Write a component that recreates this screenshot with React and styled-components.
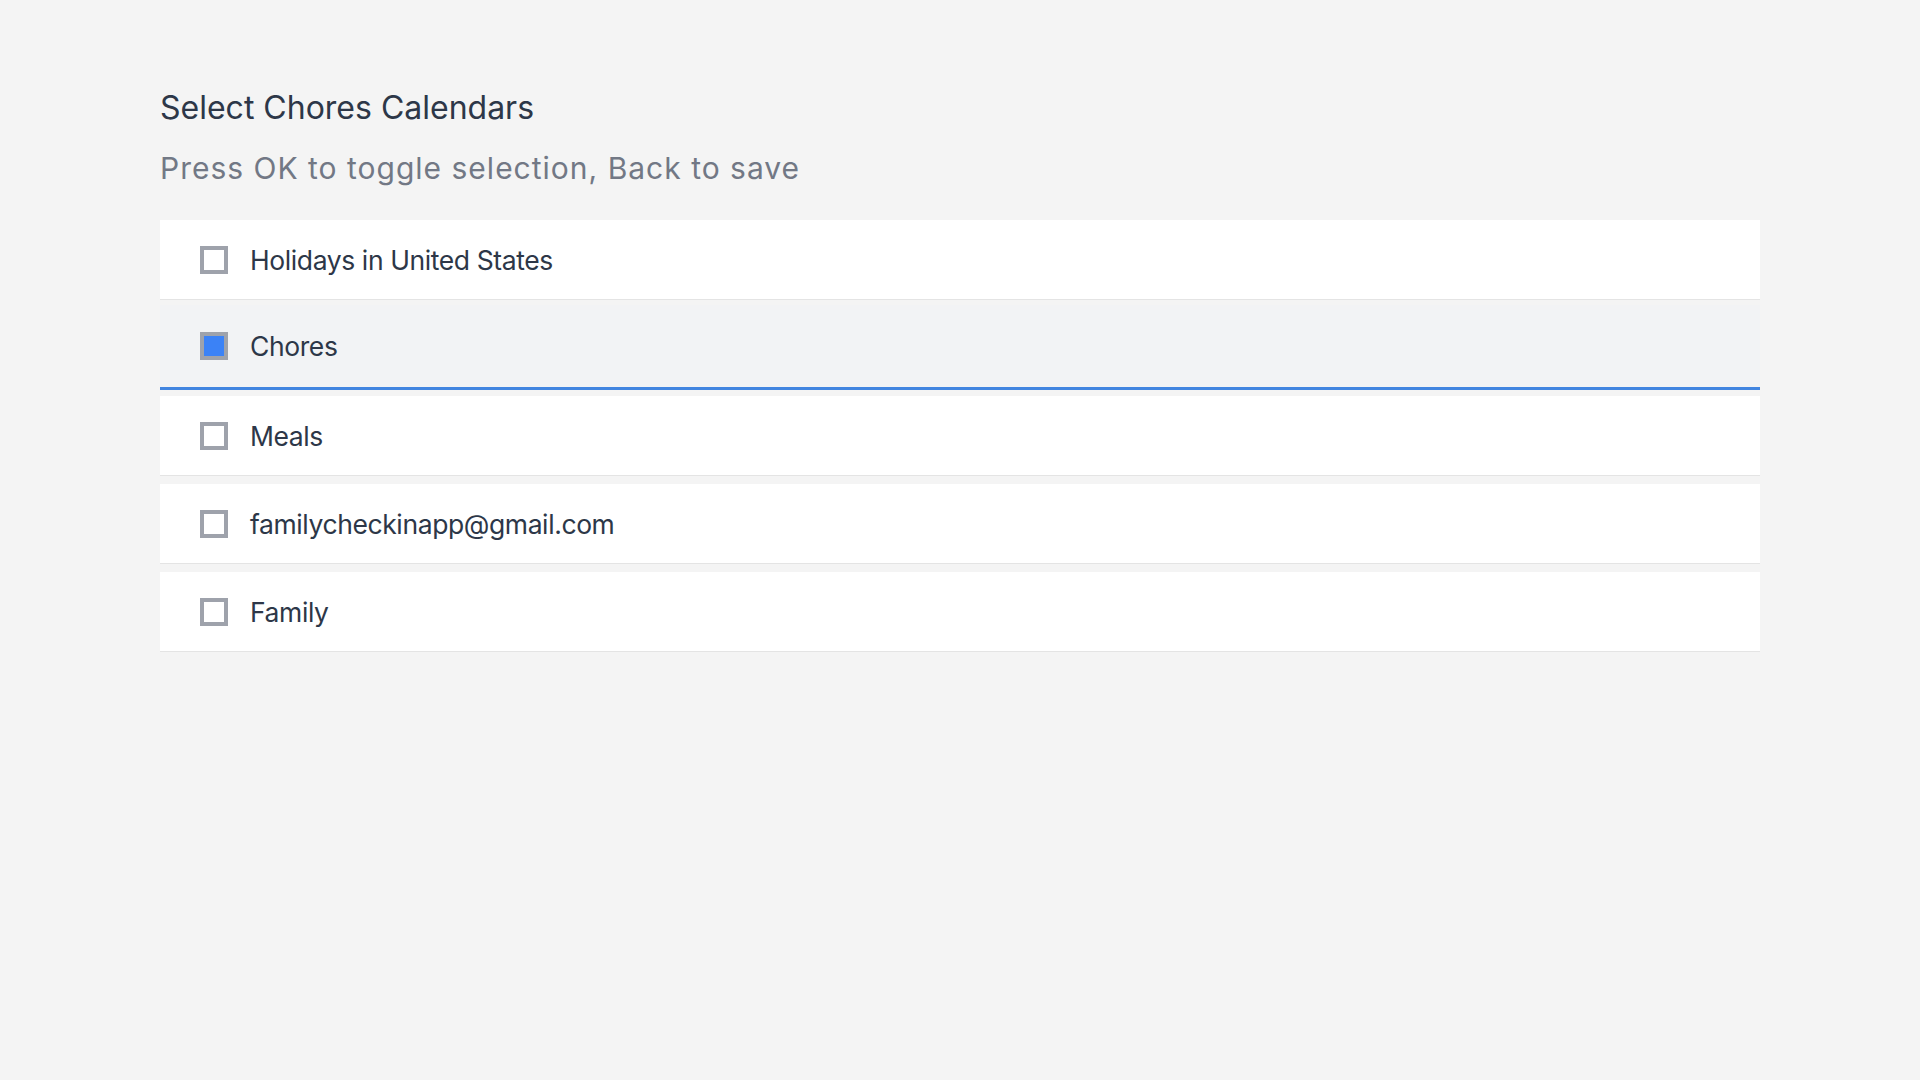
import React from "react";
import styled, { createGlobalStyle } from "styled-components";

const Global = createGlobalStyle`
  html, body { margin: 0; padding: 0; background: #f4f4f4; }
  body { font-family: Inter, "Noto Sans", "Liberation Sans", sans-serif; }
  * { box-sizing: border-box; }
`;

const Page = styled.div`
  min-height: 1080px;
  padding: 88px 160px 0 160px;
  background: #f4f4f4;
`;

const Title = styled.h1`
  margin: 0;
  font-size: 32px;
  line-height: 40px;
  font-weight: 400;
  color: #2d3748;
  letter-spacing: 0;
`;

const Subtitle = styled.p`
  margin: 22px 0 0 0;
  font-size: 30px;
  line-height: 36px;
  font-weight: 400;
  letter-spacing: 1px;
  color: #727885;
`;

const List = styled.div`
  margin-top: 34px;
  display: flex;
  flex-direction: column;
`;

const Row = styled.div`
  display: flex;
  align-items: center;
  gap: 22px;
  padding-left: 40px;
  height: ${(p) => (p.$selected ? "85px" : "80px")};
  margin-top: ${(p) => (p.$selected ? "-3px" : "0")};
  margin-bottom: ${(p) => (p.$selected ? "6px" : "8px")};
  background: ${(p) => (p.$selected ? "#f2f3f5" : "#ffffff")};
  border-bottom: ${(p) => (p.$selected ? "3px solid #4285e0" : "1px solid #e4e4e4")};
`;

const Box = styled.span`
  width: 28px;
  height: 28px;
  flex: none;
  border: 4px solid #9ea2ab;
  background: ${(p) => (p.$checked ? "#3b82f6" : "#ffffff")};
`;

const Label = styled.span`
  font-size: 26.5px;
  letter-spacing: -0.4px;
  color: #2d3748;
  font-weight: 400;
`;

const items = [
  { name: "Holidays in United States", checked: false },
  { name: "Chores", checked: true, selected: true },
  { name: "Meals", checked: false },
  { name: "familycheckinapp@gmail.com", checked: false },
  { name: "Family", checked: false },
];

export default function App() {
  return (
    <>
      <Global />
      <Page>
        <Title>Select Chores Calendars</Title>
        <Subtitle>Press OK to toggle selection, Back to save</Subtitle>
        <List>
          {items.map((it) => (
            <Row key={it.name} $selected={it.selected}>
              <Box $checked={it.checked} />
              <Label>{it.name}</Label>
            </Row>
          ))}
        </List>
      </Page>
    </>
  );
}
